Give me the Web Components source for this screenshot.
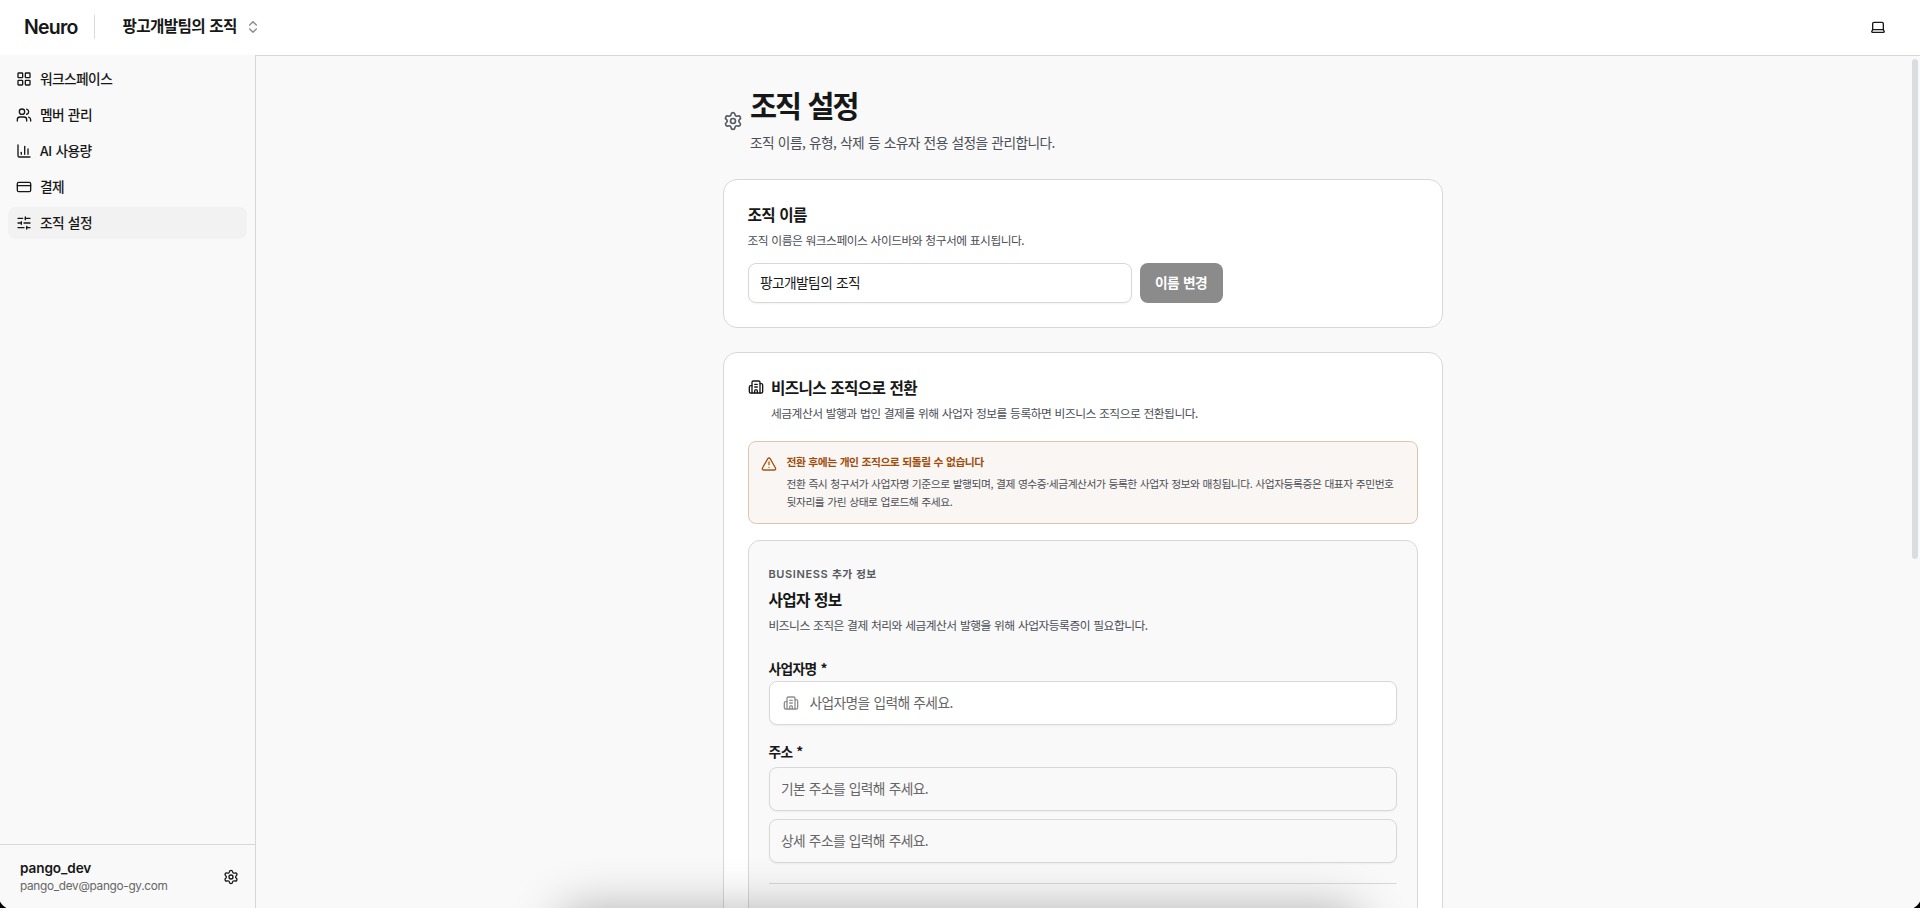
<!DOCTYPE html>
<html lang="ko">
<head>
<meta charset="utf-8">
<title>조직 설정</title>
<style>
html,body{margin:0;height:100%;overflow:hidden;background:#fff}
body{font-family:"Inter","Noto Sans CJK KR",sans-serif;color:#171717}
</style>
</head>
<body>
<org-app></org-app>
<script>
const define=(name,html,setup)=>customElements.define(name,class extends HTMLElement{
  constructor(){super();this.attachShadow({mode:'open'});}
  connectedCallback(){this.shadowRoot.innerHTML=typeof html==='function'?html(this):html;if(setup)setup(this);}
});
const attr=(e,n,d='')=>e.getAttribute(n)??d;

const ICONS={
grid:'<rect width="7" height="7" x="3" y="3" rx="1"/><rect width="7" height="7" x="14" y="3" rx="1"/><rect width="7" height="7" x="14" y="14" rx="1"/><rect width="7" height="7" x="3" y="14" rx="1"/>',
users:'<path d="M16 21v-2a4 4 0 0 0-4-4H6a4 4 0 0 0-4 4v2"/><path d="M16 3.128a4 4 0 0 1 0 7.744"/><path d="M22 21v-2a4 4 0 0 0-3-3.87"/><circle cx="9" cy="7" r="4"/>',
chart:'<path d="M3 3v16a2 2 0 0 0 2 2h16"/><path d="M18 17V9"/><path d="M13 17V5"/><path d="M8 17v-3"/>',
card:'<rect width="20" height="14" x="2" y="5" rx="2"/><path d="M2 10h20"/>',
sliders:'<path d="M10 5H3"/><path d="M12 19H3"/><path d="M14 3v4"/><path d="M16 17v4"/><path d="M21 12h-9"/><path d="M21 19h-5"/><path d="M21 5h-7"/><path d="M8 10v4"/><path d="M8 12H3"/>',
gear:'<path d="M9.671 4.136a2.34 2.34 0 0 1 4.659 0 2.34 2.34 0 0 0 3.319 1.915 2.34 2.34 0 0 1 2.33 4.033 2.34 2.34 0 0 0 0 3.831 2.34 2.34 0 0 1-2.33 4.033 2.34 2.34 0 0 0-3.319 1.915 2.34 2.34 0 0 1-4.659 0 2.34 2.34 0 0 0-3.32-1.915 2.34 2.34 0 0 1-2.33-4.033 2.34 2.34 0 0 0 0-3.831A2.34 2.34 0 0 1 6.35 6.051a2.34 2.34 0 0 0 3.319-1.915"/><circle cx="12" cy="12" r="3"/>',
building:'<path d="M10 12h4"/><path d="M10 8h4"/><path d="M14 21v-3a2 2 0 0 0-4 0v3"/><path d="M6 10H4a2 2 0 0 0-2 2v7a2 2 0 0 0 2 2h16a2 2 0 0 0 2-2V9a2 2 0 0 0-2-2h-2"/><path d="M6 21V5a2 2 0 0 1 2-2h8a2 2 0 0 1 2 2v16"/>',
alert:'<path d="m21.73 18-8-14a2 2 0 0 0-3.48 0l-8 14A2 2 0 0 0 4 21h16a2 2 0 0 0 1.73-3"/><path d="M12 9v4"/><path d="M12 17h.01"/>',
laptop:'<path d="M18 5a2 2 0 0 1 2 2v8.526a2 2 0 0 0 .212.897l1.068 2.127a1 1 0 0 1-.9 1.45H3.62a1 1 0 0 1-.9-1.45l1.068-2.127A2 2 0 0 0 4 15.526V7a2 2 0 0 1 2-2z"/><path d="M20.054 15.987H3.946"/>',
updown:'<path d="m7 15 5 5 5-5"/><path d="m7 9 5-5 5 5"/>'};
define('ui-icon',e=>`<style>:host{display:block;flex:none;width:${attr(e,'size',16)}px;height:${attr(e,'size',16)}px}svg{display:block}</style>
<svg width="100%" height="100%" viewBox="0 0 24 24" fill="none" stroke="currentColor" stroke-width="2" stroke-linecap="round" stroke-linejoin="round">${ICONS[attr(e,'name')]}</svg>`);

/* Hangul line: glyphs are set slightly tighter than the family's own advance; "up" lifts the optical baseline. */
define('ui-text',e=>{const s=+attr(e,'size',14),t=+attr(e,'track',0);return `<style>
:host{display:block;white-space:nowrap;font-family:"Noto Sans CJK KR","Inter",sans-serif;font-size:${s*.98}px;line-height:${attr(e,'lh',20)}px;font-weight:${attr(e,'weight',400)};letter-spacing:${(-.0425+t)*s}px;word-spacing:${.04*s}px;color:${attr(e,'color','inherit')};transform:translateY(-${attr(e,'up',1)}px)}</style><slot></slot>`});

define('latin-text',e=>`<style>:host{display:block;white-space:nowrap;font-family:Inter,sans-serif;font-size:${attr(e,'size')}px;line-height:${attr(e,'lh')}px;font-weight:${attr(e,'weight',400)};letter-spacing:${attr(e,'ls','0')}px;color:${attr(e,'color','inherit')}}:host([inline]){display:inline}</style><slot></slot>`);

define('app-header',`<style>
:host{display:flex;align-items:center;height:55px;background:#fff;padding:0 34px 0 24px;box-sizing:border-box;flex:none}
latin-text{margin-top:-2px}
i{width:1px;height:24px;background:#dcdcdc;margin:-1px 27px 0 17px}
ui-icon{margin:-1px 0 0 8px;color:#888}
ui-icon.end{margin-left:auto;color:#171717}
</style><latin-text size="19.5" lh="28" weight="600" ls="-0.8">Neuro</latin-text><i></i><ui-text size="16" weight="600" lh="24" up="2">팡고개발팀의 조직</ui-text><ui-icon name="updown"></ui-icon><ui-icon class="end" name="laptop"></ui-icon>`);

define('nav-item',e=>`<style>
:host{display:flex;align-items:center;gap:8px;height:32px;padding:0 8px;border-radius:8px;box-sizing:border-box}
:host([active]){background:#f2f2f2}
</style><ui-icon name="${attr(e,'icon')}"></ui-icon><ui-text weight="500"><slot></slot></ui-text>`);

define('app-sidebar',`<style>
:host{display:flex;flex-direction:column;width:256px;box-sizing:border-box;border-right:1px solid #d8d8d9;background:#f9f9f9;flex:none}
nav{flex:1;display:flex;flex-direction:column;gap:4px;padding:8px}
footer{display:flex;align-items:center;justify-content:space-between;height:64px;box-sizing:border-box;border-top:1px solid #d8d8d9;padding:0 16px 0 20px}
footer div{margin-top:-1px}
</style><nav>
<nav-item icon="grid">워크스페이스</nav-item><nav-item icon="users">멤버 관리</nav-item><nav-item icon="chart">AI 사용량</nav-item><nav-item icon="card">결제</nav-item><nav-item icon="sliders" active>조직 설정</nav-item></nav>
<footer><div><latin-text size="13.6" lh="20" weight="600" ls="-0.1">pango_dev</latin-text><latin-text size="11.8" lh="16" color="#666" ls="-0.3">pango_dev@pango-gy.com</latin-text></div><ui-icon name="gear"></ui-icon></footer>`);

define('ui-card',`<style>:host{display:block;box-sizing:border-box;background:#fff;border:1px solid #d8d8d9;border-radius:14px;padding:24px 24px 24px 23.5px}</style><slot></slot>`);

define('ui-field',e=>`<style>
:host{display:flex;align-items:center;box-sizing:border-box;height:${attr(e,'h',44)}px;border:1px solid #d8d8d9;border-radius:8px;padding:0 11.5px;background:${attr(e,'bg','#f9f9f9')};box-shadow:0 1px 2px rgba(0,0,0,.05);color:${attr(e,'color','#666')}}
ui-icon{color:#8f8f8f;margin:0 11px 0 1.5px}
</style>${attr(e,'icon')?`<ui-icon name="${attr(e,'icon')}"></ui-icon>`:''}<ui-text><slot></slot></ui-text>`);

define('ui-button',`<style>:host{display:flex;align-items:center;justify-content:center;width:83px;height:40px;border-radius:8px;background:#8b8b8b;color:#fff}</style><ui-text weight="600"><slot></slot></ui-text>`);

define('ui-alert',`<style>
:host{display:flex;gap:9.5px;box-sizing:border-box;height:83px;border:1px solid #dfc5b0;border-radius:8px;background:#faf6f3;padding:11px 12.5px}
ui-icon{color:#a85310;margin-top:3px}
</style><ui-icon name="alert"></ui-icon><div><slot></slot></div>`);

define('business-form',`<style>
:host{display:block;box-sizing:border-box;height:520px;border:1px solid #d8d8d9;border-radius:12px;background:#f9f9f9;padding:24px 20px}
latin-text{vertical-align:baseline}
.f{margin-top:2px}
hr{border:0;height:1px;background:#d8d8d9;margin:20px 0 0}
</style>
<ui-text size="11" lh="18" weight="600" track="0.07" color="#575a61"><latin-text inline size="11" lh="18" weight="600" ls="0.6">BUSINESS</latin-text> 추가 정보</ui-text>
<ui-text size="16" lh="24" weight="600" up="0" style="margin-top:4px">사업자 정보</ui-text>
<ui-text size="12" lh="20" color="#4b4e56" style="margin-top:4px">비즈니스 조직은 결제 처리와 세금계산서 발행을 위해 사업자등록증이 필요합니다.</ui-text>
<ui-text weight="600" style="margin-top:23px">사업자명 *</ui-text>
<ui-field class="f" bg="#fff" icon="building">사업자명을 입력해 주세요.</ui-field>
<ui-text weight="600" style="margin-top:17px">주소 *</ui-text>
<ui-field style="margin-top:5px">기본 주소를 입력해 주세요.</ui-field>
<ui-field style="margin-top:8px">상세 주소를 입력해 주세요.</ui-field>
<hr>`);

define('settings-page',`<style>
:host{display:block;flex:1;min-width:0;height:853px;overflow:hidden;box-sizing:border-box;border-top:1px solid #d8d8d9;background:#f9f9f9;position:relative}
.scroll{padding-right:10px}
main{width:720px;margin:0 auto;padding:30px 0 0}
.head{display:flex;align-items:center;gap:7px;height:70px;color:#575a61}
.row{display:flex;gap:8px;margin-top:12px}
.row ui-field{width:384px}
ui-card+ui-card{margin-top:24px}
.t{display:flex;gap:7.5px}
.thumb{position:absolute;right:2px;top:3px;width:6px;height:500px;border-radius:3px;background:#dbdce0}
</style>
<div class="scroll"><main>
<div class="head"><ui-icon name="gear" size="20"></ui-icon><div>
<ui-text size="30" lh="40" weight="700" track="-0.024" up="3" color="#171717">조직 설정</ui-text>
<ui-text lh="24" up="2" color="#4b4e56" style="margin-top:5px">조직 이름, 유형, 삭제 등 소유자 전용 설정을 관리합니다.</ui-text></div></div>
<ui-card style="margin-top:23px;height:149px">
<ui-text size="16" lh="24" weight="600">조직 이름</ui-text>
<ui-text size="12" lh="20" color="#4b4e56" style="margin-top:3px">조직 이름은 워크스페이스 사이드바와 청구서에 표시됩니다.</ui-text>
<div class="row"><ui-field h="40" bg="#fff" color="#171717">팡고개발팀의 조직</ui-field><ui-button>이름 변경</ui-button></div>
</ui-card>
<ui-card>
<div class="t"><ui-icon name="building" style="margin-top:2px"></ui-icon><div>
<ui-text size="16" lh="24" weight="600">비즈니스 조직으로 전환</ui-text>
<ui-text size="12" lh="20" color="#4b4e56" style="margin-top:3px">세금계산서 발행과 법인 결제를 위해 사업자 정보를 등록하면 비즈니스 조직으로 전환됩니다.</ui-text></div></div>
<ui-alert style="margin-top:17px">
<ui-text size="11" lh="18" weight="600" color="#a04d0c">전환 후에는 개인 조직으로 되돌릴 수 없습니다</ui-text>
<ui-text size="11" lh="18" color="#4b4e56" track="0.001" style="margin-top:4px">전환 즉시 청구서가 사업자명 기준으로 발행되며, 결제 영수증·세금계산서가 등록한 사업자 정보와 매칭됩니다. 사업자등록증은 대표자 주민번호<br>뒷자리를 가린 상태로 업로드해 주세요.</ui-text>
</ui-alert>
<business-form style="margin-top:16px"></business-form>
</ui-card>
</main></div><div class="thumb"></div>`);

define('org-app',`<style>
:host{display:flex;flex-direction:column;width:1920px;height:908px;overflow:hidden;position:relative}
.body{display:flex;height:853px}
.dock{position:absolute;left:562px;width:796px;top:910px;height:60px;border-radius:10px;box-shadow:0 0 50px rgba(0,0,0,.3);pointer-events:none}
.corner{position:absolute;bottom:0;width:10px;height:10px}
.l{left:0;background:radial-gradient(circle at 13px -3px,transparent 14px,#000 15px)}
.r{right:0;background:radial-gradient(circle at -3px -3px,transparent 14px,#000 15px)}
</style><app-header></app-header><div class="body"><app-sidebar></app-sidebar><settings-page></settings-page></div>
<div class="dock"></div><div class="corner l"></div><div class="corner r"></div>`);
</script>
</body>
</html>
